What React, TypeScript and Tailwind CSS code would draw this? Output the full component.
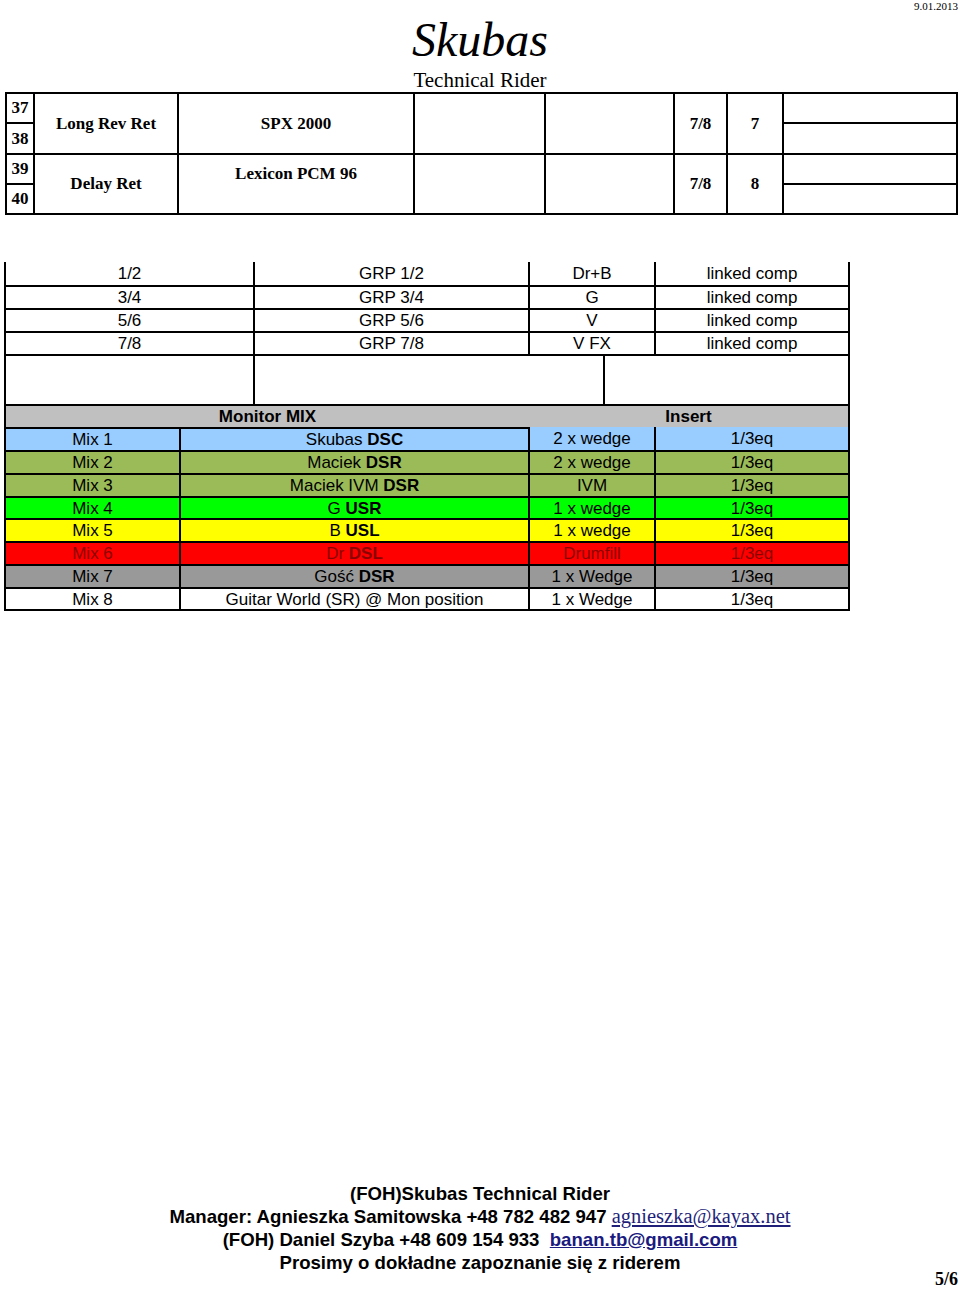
const serif = "font-['Liberation_Serif','Times_New_Roman',serif]";
const sans = "font-['Liberation_Sans',Arial,sans-serif]";

const groups = [
  ["1/2", "GRP 1/2", "Dr+B", "linked comp"],
  ["3/4", "GRP 3/4", "G", "linked comp"],
  ["5/6", "GRP 5/6", "V", "linked comp"],
  ["7/8", "GRP 7/8", "V FX", "linked comp"],
];

type Mix = {
  name: string;
  who: string;
  pos: string;
  out: string;
  bg: string;
  text: string;
  h: string;
};

const mixes: Mix[] = [
  { name: "Mix 1", who: "Skubas", pos: "DSC", out: "2 x wedge", bg: "bg-[#99ccff]", text: "text-black", h: "h-[21px]" },
  { name: "Mix 2", who: "Maciek", pos: "DSR", out: "2 x wedge", bg: "bg-[#9bbb59]", text: "text-black", h: "h-[21px]" },
  { name: "Mix 3", who: "Maciek IVM", pos: "DSR", out: "IVM", bg: "bg-[#9bbb59]", text: "text-black", h: "h-[21px]" },
  { name: "Mix 4", who: "G", pos: "USR", out: "1 x wedge", bg: "bg-[#00ff00]", text: "text-black", h: "h-[20px]" },
  { name: "Mix 5", who: "B", pos: "USL", out: "1 x wedge", bg: "bg-[#ffff00]", text: "text-black", h: "h-[21px]" },
  { name: "Mix 6", who: "Dr", pos: "DSL", out: "Drumfill", bg: "bg-[#ff0000]", text: "text-[#8b0000]", h: "h-[21px]" },
  { name: "Mix 7", who: "Gość", pos: "DSR", out: "1 x Wedge", bg: "bg-[#999999]", text: "text-black", h: "h-[21px]" },
  { name: "Mix 8", who: "Guitar World (SR) @ Mon position", pos: "", out: "1 x Wedge", bg: "bg-white", text: "text-black", h: "h-[20px]" },
];

const Cell = ({
  children,
  className = "",
  bg = "bg-white",
}: {
  children?: React.ReactNode;
  className?: string;
  bg?: string;
}) => <div className={`flex items-center justify-center ${bg} ${className}`}>{children}</div>;

const App = () => {
  return (
    <div className="w-[960px] h-[1289px] bg-white text-black overflow-hidden">
      {/* header */}
      <div className="grid grid-cols-[1fr_auto_1fr] h-[92px]">
        <div />
        <div className={`flex flex-col items-center pt-[16px] ${serif}`}>
          <div className="text-[48px] leading-[48px] italic">Skubas</div>
          <div className="text-[21px] leading-[21px] mt-[6px]">Technical Rider</div>
        </div>
        <div className={`justify-self-end pt-[1px] pr-[2px] text-[11px] leading-[11px] ${serif}`}>9.01.2013</div>
      </div>

      {/* effects returns */}
      <div
        className={`ml-[5px] w-[953px] grid grid-cols-[26px_142px_234px_129px_127px_51px_54px_172px] grid-rows-[28px_29px_28px_28px] gap-[2px] p-[2px] bg-black font-bold text-[17px] leading-none ${serif}`}
      >
        <Cell className="pb-[1px]">37</Cell>
        <Cell className="row-span-2 pb-[1px]">Long Rev Ret</Cell>
        <Cell className="row-span-2 pb-[1px]">SPX 2000</Cell>
        <Cell className="row-span-2" />
        <Cell className="row-span-2" />
        <Cell className="row-span-2 pb-[1px]">7/8</Cell>
        <Cell className="row-span-2 pb-[1px]">7</Cell>
        <Cell />
        <Cell className="pb-[1px]">38</Cell>
        <Cell />
        <Cell className="pb-[1px]">39</Cell>
        <Cell className="row-span-2 pb-[1px]">Delay Ret</Cell>
        <Cell className="row-span-2 pb-[21px]">Lexicon PCM 96</Cell>
        <Cell className="row-span-2" />
        <Cell className="row-span-2" />
        <Cell className="row-span-2 pb-[1px]">7/8</Cell>
        <Cell className="row-span-2 pb-[1px]">8</Cell>
        <Cell />
        <Cell className="pb-[1px]">40</Cell>
        <Cell />
      </div>

      {/* groups */}
      <div className={`mt-[47px] ml-[4px] w-[846px] flex flex-col gap-[2px] px-[2px] bg-black text-[17px] leading-none ${sans}`}>
        {groups.map((g, i) => (
          <div key={g[0]} className={`flex gap-[2px] ${i === 0 ? "h-[23px]" : "h-[21px]"}`}>
            <Cell className="w-[247px]">{g[0]}</Cell>
            <Cell className="w-[273px]">{g[1]}</Cell>
            <Cell className="w-[124px]">{g[2]}</Cell>
            <Cell className="w-[192px]">{g[3]}</Cell>
          </div>
        ))}
        <div className="flex gap-[2px] h-[48px]">
          <Cell className="w-[247px]" />
          <Cell className="w-[348px]" />
          <Cell className="w-[243px]" />
        </div>
      </div>

      {/* monitor mixes */}
      <div className={`ml-[4px] w-[846px] flex flex-col gap-[2px] p-[2px] bg-black text-[17px] leading-none ${sans}`}>
        <div className="flex h-[21px] bg-[#c0c0c0] font-bold">
          <div className="w-[523px] flex items-center justify-center">Monitor MIX</div>
          <div className="flex-1 flex items-center justify-center">Insert</div>
        </div>
        {mixes.map((m, i) => (
          <div key={m.name} className={`flex gap-[2px] ${m.h} ${m.text}`}>
            <Cell bg={m.bg} className="w-[173px]">{m.name}</Cell>
            <Cell bg={m.bg} className="w-[347px] whitespace-pre">
              {m.who}
              {m.pos && <b> {m.pos}</b>}
            </Cell>
            <Cell bg={m.bg} className={`w-[124px] ${i === 0 ? "-mt-[2px]" : ""}`}>{m.out}</Cell>
            <Cell bg={m.bg} className={`w-[192px] ${i === 0 ? "-mt-[2px]" : ""}`}>1/3eq</Cell>
          </div>
        ))}
      </div>

      {/* footer */}
      <div className={`mt-[571px] text-center font-bold text-[18.6px] leading-[23px] ${sans}`}>
        <div>(FOH)Skubas Technical Rider</div>
        <div>
          Manager: Agnieszka Samitowska +48 782 482 947{" "}
          <span className={`font-normal text-[20.5px] underline text-[#1f1f7a] ${serif}`}>agnieszka@kayax.net</span>
        </div>
        <div>
          (FOH) Daniel Szyba +48 609 154 933&nbsp;{" "}
          <span className="underline text-[#1a1a80]">banan.tb@gmail.com</span>
        </div>
        <div>Prosimy o dokładne zapoznanie się z riderem</div>
      </div>
      <div className={`-mt-[4px] pr-[2px] text-right font-bold text-[18px] leading-[18px] ${serif}`}>5/6</div>
    </div>
  );
};

export default App;
